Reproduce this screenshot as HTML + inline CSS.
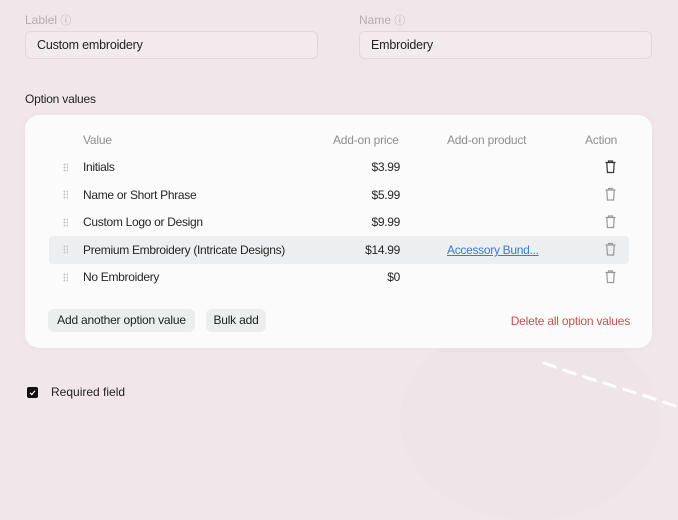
<!DOCTYPE html>
<html><head><meta charset="utf-8"><style>
*{box-sizing:border-box;margin:0;padding:0}
body{width:678px;height:414px;overflow:hidden;background:#f1e7eb;font-family:"Liberation Sans",sans-serif;position:relative;color:#222}
.abs{position:absolute}
.lbl{font-size:12px;color:#b3adb0;top:12px}
.inp{top:31px;height:28px;border:1px solid #e2d8dc;border-radius:6px;background:#f3eaee;font-size:12.5px;padding-left:11px;line-height:26px;color:#222;letter-spacing:-0.2px}
.card{left:25px;top:115px;width:627px;height:233px;background:#fbfbfb;border-radius:14px;box-shadow:0 0 8px rgba(0,0,0,0.04)}
.th{font-size:12px;color:#8e8e8e;top:133px;letter-spacing:-0.2px}
.row{font-size:12px;color:#262626;letter-spacing:-0.3px}
.hl{left:49px;top:236px;width:580px;height:28px;background:#eceeef;border-radius:4px}
.btn{top:309px;height:23px;background:#eceeee;border-radius:6px;font-size:12px;line-height:23px;text-align:center;color:#222;letter-spacing:-0.2px}
.dots{width:5px;height:9px;background-image:radial-gradient(circle,#c5c5c5 0.8px,transparent 1px);background-size:3px 3px}
</style></head><body>
<div class="abs" style="left:400px;top:320px;width:260px;height:200px;border-radius:50%;background:#eee2e6;opacity:.7"></div>
<div class="abs lbl" style="left:25px">Lablel <span style="font-size:11px">ⓘ</span></div>
<div class="abs lbl" style="left:359px">Name <span style="font-size:11px">ⓘ</span></div>
<div class="abs inp" style="left:25px;width:293px">Custom embroidery</div>
<div class="abs inp" style="left:359px;width:293px">Embroidery</div>
<div class="abs" style="left:25px;top:92px;font-size:12px;color:#222;letter-spacing:-0.2px">Option values</div>
<div class="abs card"></div>
<div class="abs hl"></div>
<div class="abs th" style="left:83px">Value</div>
<div class="abs th" style="left:333px">Add-on price</div>
<div class="abs th" style="left:447px">Add-on product</div>
<div class="abs th" style="left:585px">Action</div>

<div class="abs dots" style="left:63px;top:163px"></div><div class="abs row" style="left:83px;top:160px">Initials</div><div class="abs row" style="right:278px;top:160px">$3.99</div>
<div class="abs dots" style="left:63px;top:190px"></div><div class="abs row" style="left:83px;top:188px">Name or Short Phrase</div><div class="abs row" style="right:278px;top:188px">$5.99</div>
<div class="abs dots" style="left:63px;top:218px"></div><div class="abs row" style="left:83px;top:215px">Custom Logo or Design</div><div class="abs row" style="right:278px;top:215px">$9.99</div>
<div class="abs dots" style="left:63px;top:245px"></div><div class="abs row" style="left:83px;top:243px">Premium Embroidery (Intricate Designs)</div><div class="abs row" style="right:278px;top:243px">$14.99</div>
<div class="abs row" style="left:447px;top:243px;color:#3c78d8;text-decoration:underline">Accessory Bund...</div>
<div class="abs dots" style="left:63px;top:273px"></div><div class="abs row" style="left:83px;top:270px">No Embroidery</div><div class="abs row" style="right:278px;top:270px">$0</div>

<svg class="abs" style="left:604px;top:160px" width="13" height="130" viewBox="0 0 13 130" fill="none" stroke-width="1.2">
<g stroke="#333"><path d="M1.5 2.5h10M4.5 2.5V1h4v1.5M2.8 2.5l.6 10h6.2l.6-10"/></g>
<g stroke="#999"><path transform="translate(0,27.5)" d="M1.5 2.5h10M4.5 2.5V1h4v1.5M2.8 2.5l.6 10h6.2l.6-10"/>
<path transform="translate(0,55)" d="M1.5 2.5h10M4.5 2.5V1h4v1.5M2.8 2.5l.6 10h6.2l.6-10"/>
<path transform="translate(0,82.5)" d="M1.5 2.5h10M4.5 2.5V1h4v1.5M2.8 2.5l.6 10h6.2l.6-10"/>
<path transform="translate(0,110)" d="M1.5 2.5h10M4.5 2.5V1h4v1.5M2.8 2.5l.6 10h6.2l.6-10"/></g>
</svg>

<div class="abs btn" style="left:48px;width:147px">Add another option value</div>
<div class="abs btn" style="left:206px;width:60px">Bulk add</div>
<div class="abs" style="right:48px;top:314px;font-size:12px;color:#c8504f;letter-spacing:-0.2px">Delete all option values</div>

<svg class="abs" style="left:530px;top:355px" width="148" height="59"><path d="M14 8 C60 25 100 35 148 52" stroke="#fff" stroke-width="3" stroke-dasharray="12 9" fill="none" stroke-linecap="round"/></svg>

<div class="abs" style="left:27px;top:387px;width:11px;height:11px;background:#111;border-radius:2px"></div>
<svg class="abs" style="left:27px;top:387px" width="11" height="11"><path d="M3 5.8l1.8 1.8L8 3.8" stroke="#fff" stroke-width="1.2" fill="none"/></svg>
<div class="abs" style="left:51px;top:385px;font-size:12px;color:#222">Required field</div>
</body></html>
